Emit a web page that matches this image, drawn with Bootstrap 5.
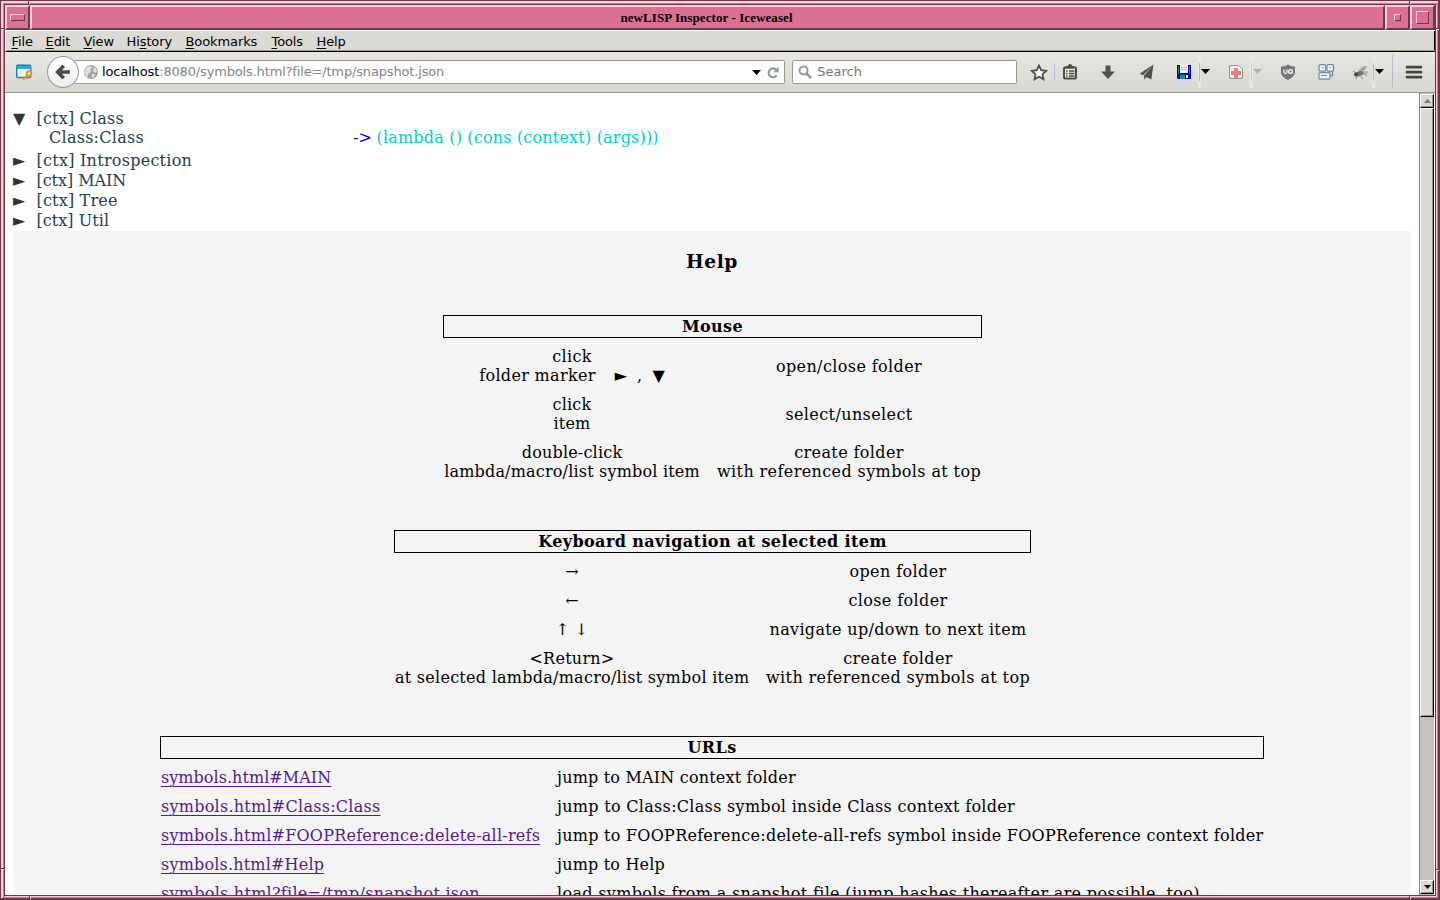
<!DOCTYPE html>
<html lang="en">
<head>
<meta charset="utf-8">
<title>newLISP Inspector - Iceweasel</title>
<link href="https://cdn.jsdelivr.net/npm/bootstrap@5.3.0/dist/css/bootstrap.min.css" rel="stylesheet">
<style>
:root{--deep:#6b3a4a;--lite:#ffc9d8;--rose:#db7093;--face:#dcdad5}
body{width:1440px;height:900px;overflow:hidden;background:var(--deep);font:13px/16px "DejaVu Sans",sans-serif;color:#000}
svg{display:block;flex:none}
/* window frame */
.frame-win{width:1440px;height:900px;padding:1px 2px 2px 1px;background:var(--deep)}
.frame-edge{height:897px;width:1437px;background:var(--rose);border:solid var(--lite);border-width:2px 0 0 2px;padding:1px}
.frame-core{width:1432px;height:892px;border:1px solid var(--deep);box-shadow:1px 1px var(--lite)}
.notch{position:absolute;background:var(--deep)}
.notch.v{width:2px;height:3px;border-right:1px solid var(--lite)}
.notch.h{height:2px;width:3px;border-bottom:1px solid var(--lite)}
.tbar{height:25px}
.tb{background:var(--rose);border:2px solid;border-color:var(--lite) var(--deep) var(--deep) var(--lite);height:25px}
.ttl{font:bold 13px/21px "Liberation Serif",serif;letter-spacing:.08px;padding-right:2px}
.bev{border:1px solid;border-color:var(--lite) var(--deep) var(--deep) var(--lite)}
/* menu and toolbar */
.menus{height:22px;background:var(--face);border-top:1px solid #fff;border-left:1px solid #fff;border-bottom:1px solid #000;box-shadow:inset 0 -1px #9a978d,inset -1px 0 #000;letter-spacing:-.1px}
.menus u{text-underline-offset:2px;text-decoration-thickness:1px}
.tools{height:41px;background:linear-gradient(#e8e6e3,#d9d7d1);border-bottom:1px solid #9b978b}
.back-b{width:32px;height:32px;border:1px solid #929aa8;border-radius:50%;background:linear-gradient(#fff,#edecea);z-index:2}
.field{height:24px;background:#fff;border:1px solid #9b978b;border-radius:2px}
/* page */
.view{height:802px}
.pg{width:1414px;height:802px;background:#fff;padding:16px 8px 0;overflow:hidden;font:16px/19px "DejaVu Serif",serif;letter-spacing:.26px}
.tree{color:#1e4054}
.tree .node{height:20px}
.mk{font-family:"DejaVu Sans",sans-serif;letter-spacing:0;color:#333;width:23.5px}
.blk{color:#000}
.help{background:#f4f4f4;height:671px;padding-top:19px;width:1398px}
.help h3{font:bold 18.72px/22px "DejaVu Serif",serif;letter-spacing:.55px;margin:0 0 43px}
.cap{border:1px solid #000;height:23px;line-height:21px;font-weight:bold;letter-spacing:.4px;margin-bottom:9px}
.pairs{column-gap:17px;row-gap:10px;padding:0 1px;align-items:center;white-space:nowrap}
.mouse,.keys{margin-bottom:49px}
.mouse{width:539px;margin-left:430px}.mouse .pairs{grid-template-columns:256px 264px}
.keys{width:637px;margin-left:381px}.keys .pairs{grid-template-columns:354px 264px}
.urls{width:1104px;margin-left:147px}.urls .pairs{grid-template-columns:379px 706px}
.urls a{color:#551a8b;text-underline-offset:3px;text-decoration-thickness:1px}
.s0{letter-spacing:-.05px}.s1{letter-spacing:.05px}.s2{letter-spacing:.19px}.s3{letter-spacing:.33px}.s4{letter-spacing:.39px}
.sbar{width:16px;background:#c4c2bc;border-left:1px solid #84827c;border-right:1px solid #fff;padding:1px 0}
.knob{background:var(--face);border:1px solid;border-color:#fff #000 #000 #fff;box-shadow:inset -1px -1px #9a978d}
</style>
</head>
<body>
<div class="frame-win position-relative">
<div class="frame-edge"><div class="frame-core">
  <header class="tbar d-flex">
    <div class="tb d-flex align-items-center justify-content-center" style="width:25px"><div class="bev" style="width:15px;height:7px"></div></div>
    <div class="tb ttl flex-fill text-center">newLISP Inspector - Iceweasel</div>
    <div class="tb d-flex align-items-center justify-content-center" style="width:25px"><div class="bev" style="width:7px;height:7px"></div></div>
    <div class="tb d-flex align-items-center justify-content-center" style="width:25px"><div class="bev" style="width:13px;height:13px"></div></div>
  </header>
  <nav class="menus d-flex" style="padding:3px 0 0 5.500px">
    <span style="width:34px"><u>F</u>ile</span><span style="width:38px"><u>E</u>dit</span><span style="width:43px"><u>V</u>iew</span><span style="width:59px">Hi<u>s</u>tory</span><span style="width:86px"><u>B</u>ookmarks</span><span style="width:45px"><u>T</u>ools</span><span><u>H</u>elp</span>
  </nav>
  <div class="tools d-flex align-items-center">
    <svg style="margin-left:10px" width="18" height="18" viewBox="0 0 18 18"><rect x="1.700" y="2.200" width="14" height="12.300" rx="1" fill="#f4f9fc" stroke="#1481bd" stroke-width="1.400"/><path d="M2 3h13.500v3H2z" fill="#38a5dc"/><path d="M4 8h6M4 10h4" stroke="#cfe0e8"/><circle cx="14" cy="10.500" r="2.300" fill="#fff2cf" stroke="#dc9a28" stroke-width="2"/><path d="M12 12.500 8 16.500" stroke="#dc9a28" stroke-width="2.200"/><path d="M10.500 14.500l1.500 1.500" stroke="#dc9a28" stroke-width="1.500"/></svg>
    <div class="back-b d-flex align-items-center justify-content-center" style="margin-left:14px"><svg width="16" height="16" viewBox="0 0 16 16"><path d="M8.700 1.800 2.700 8l6 6.200M3 8h12" fill="none" stroke="#4a4b49" stroke-width="3.600"/></svg></div>
    <div class="field d-flex align-items-center" style="width:712px;margin-left:-5px;padding-left:8px">
      <svg width="16" height="16" viewBox="0 0 16 16"><circle cx="8" cy="8" r="7" fill="#a5a5a5"/><path d="M2 6l2-3 4-1 1 2-2 2 1 2-3 2-1 4-2-4zM10 3l3 1 1 4-2 1-2-2 1-2zM9 10l3 0-1 3-2 1z" fill="#e2e2e2"/></svg>
      <span style="margin-left:3px;letter-spacing:-.13px">localhost<span style="color:#858585;letter-spacing:-.16px">:8080/symbols.html?file=/tmp/snapshot.json</span></span>
      <svg class="ms-auto" width="9" height="5" viewBox="0 0 9 5"><path d="M0 0h9L4.500 5z"/></svg>
      <svg style="margin:0 4px 0 6px" width="13" height="13" viewBox="0 0 13 13"><path d="M9.700 9.300A4.400 4.400 0 1 1 9 3.600" fill="none" stroke="#8f9ca8" stroke-width="2.200"/><path d="M11.700.700v5.600H6.300z" fill="#8f9ca8"/></svg>
    </div>
    <div class="field d-flex align-items-center" style="width:225px;margin-left:7px;padding-left:5px;color:#767676">
      <svg width="14" height="14" viewBox="0 0 14 14"><circle cx="5.500" cy="5.500" r="4" fill="none" stroke="#999" stroke-width="2"/><path d="m8.500 8.500 4.700 4.700" stroke="#999" stroke-width="2.600"/></svg>
      <span style="margin-left:5px">Search</span>
    </div>
    <svg width="418" height="40" viewBox="1017 52 418 40">
      <path d="M1039 65.500l2.200 4.700 5 .600-3.700 3.500 1 5-4.500-2.500-4.500 2.500 1-5-3.700-3.500 5-.600z" fill="#f2f2f0" stroke="#4a4b49" stroke-width="1.700"/>
      <path d="M1054.500 63v18" stroke="#b8c3cf"/>
      <rect x="1064" y="67.500" width="12" height="11" rx="1" fill="#eee" stroke="#4a4b49" stroke-width="2"/><path d="M1066 66h2a2 2 0 0 1 4 0h2v2.500h-8z" fill="#4a4b49"/><path d="M1066 71h1.500M1069 71h5.500M1066 73.500h1.500M1069 73.500h5.500M1066 76h1.500M1069 76h5.500" stroke="#4a4b49" stroke-width="1.300"/>
      <path d="M1105.500 65.500h5v6h4.500l-7 7.500-7-7.500h4.500z" fill="#51524f"/>
      <path d="M1153.500 64.500l-14 9.300 3.500 1.500zM1153.500 64.500l-9.500 11 .3 4.200 2-2.800 5 2.600z" fill="#51524f"/>
      <path d="M1177 65h14v14h-13l-1-1z" fill="#0000b8"/><path d="M1178 66h1v8h-1zM1189 66h1v8h-1z" fill="#168a87"/><path d="M1180 65h8v8h-8z" fill="#f2f2ec"/><path d="M1181 67.500h6M1181 69.500h6" stroke="#bbb"/><path d="M1180 74.500h5v4.500h-5z" fill="#168a87"/><path d="M1186 75h2v3h-2z" fill="#fff"/>
      <path d="M1199.500 56v32M1251.500 56v32M1373.500 56v32" stroke="#eceae7" stroke-width="2.500"/><path d="M1199.500 63v18M1373.500 63v18" stroke="#bab8b3"/><path d="M1251.500 63v18" stroke="#cfcdc9"/>
      <path d="M1201 69h9l-4.500 5zM1375 69h9l-4.500 5z" fill="#000"/><path d="M1253 69h9l-4.500 5z" fill="#b4b2ae"/>
      <path d="M1229.500 65.500h9l4 3.500v9.500h-13z" fill="#f5f4f1" stroke="#96948f"/><path d="M1234 68h4v3h3v4h-3v3h-4v-3h-3v-4h3z" fill="#ef7b7b"/>
      <path d="M1288 64.500c2 1.500 4.500 2 7 2v5.500c0 3.500-3 6-7 8-4-2-7-4.500-7-8v-5.500c2.500 0 5-.500 7-2z" fill="#777"/><path d="M1284 69.500v2.500a1.500 1.500 0 0 0 3 0v-2.500" fill="none" stroke="#fff" stroke-width="1.200"/><circle cx="1290.500" cy="71.500" r="1.900" fill="none" stroke="#fff" stroke-width="1.200"/>
      <g fill="#f1f2f3" stroke="#6d89b5" stroke-width="1.200"><rect x="1319" y="64.600" width="6.500" height="6.500" rx="1"/><rect x="1327" y="64.600" width="6.500" height="6.500" rx="1"/><rect x="1319" y="72.600" width="11" height="6.500" rx="1"/></g><path d="M1332.500 71v4.500h-2" fill="none" stroke="#6d89b5" stroke-width="1.300"/><path d="M1322 67.500h1.500M1329.500 67.500h1.500M1321 75.500h6" stroke="#888"/>
      <g opacity=".85"><path d="M1358 70l5-4 5 0-4 5zM1361 72l6-1 2 2-6 2z" fill="#b2b1ad"/><ellipse cx="1359.500" cy="73.500" rx="4" ry="2.600" transform="rotate(-25 1359.500 73.500)" fill="#5e5e5b"/><circle cx="1356" cy="74.500" r="2" fill="#2e2e2c"/><path d="M1353 71l3 2M1357 76l-1 3M1361 76l1.500 3M1364 73.500l3 2.500M1362 70l3-2.500" stroke="#60605d" stroke-width=".8"/></g>
      <path d="M1392.500 55v33" stroke="#b1bdca"/>
      <path d="M1407 67.200h14M1407 72.200h14M1407 77.200h14" stroke="#454643" stroke-width="2.800" stroke-linecap="round"/>
    </svg>
  </div>
  <div class="view d-flex">
    <main class="pg">
      <div class="tree">
        <div class="d-flex"><span class="mk">▼</span><span class="s2">[ctx] Class</span></div>
        <div class="d-flex" style="padding-left:36px;height:23px"><span style="width:304px">Class:Class</span><span style="color:#00f;width:23.500px;letter-spacing:0">-&gt;</span><span class="s2" style="color:#00ced1">(lambda () (cons (context) (args)))</span></div>
        <div class="node d-flex"><span class="mk">►</span><span>[ctx] Introspection</span></div>
        <div class="node d-flex"><span class="mk">►</span><span class="s0">[ctx] MAIN</span></div>
        <div class="node d-flex"><span class="mk">►</span><span class="s2">[ctx] Tree</span></div>
        <div class="node d-flex"><span class="mk">►</span><span class="s1">[ctx] Util</span></div>
      </div>
      <section class="help">
        <h3 class="text-center">Help</h3>
        <div class="mouse text-center">
          <div class="cap">Mouse</div>
          <div class="pairs d-grid">
            <div class="s3">click<br>folder marker<span class="mk blk" style="margin:0 10px 0 19px">►</span>,<span class="mk blk" style="margin-left:10px">▼</span></div><div class="s4">open/close folder</div>
            <div class="s2">click<br>item</div><div class="s4">select/unselect</div>
            <div class="s2">double-click<br>lambda/macro/list symbol item</div><div class="s4">create folder<br>with referenced symbols at top</div>
          </div>
        </div>
        <div class="keys text-center">
          <div class="cap">Keyboard navigation at selected item</div>
          <div class="pairs d-grid">
            <div>→</div><div class="s4">open folder</div>
            <div>←</div><div class="s4">close folder</div>
            <div>↑ ↓</div><div class="s3">navigate up/down to next item</div>
            <div>&lt;Return&gt;<br>at selected lambda/macro/list symbol item</div><div class="s4">create folder<br>with referenced symbols at top</div>
          </div>
        </div>
        <div class="urls">
          <div class="cap text-center">URLs</div>
          <div class="pairs d-grid">
            <div><a class="s1" href="#MAIN">symbols.html#MAIN</a></div><div class="s2">jump to MAIN context folder</div>
            <div><a href="#Class">symbols.html#Class:Class</a></div><div class="s3" style="letter-spacing:.3px">jump to Class:Class symbol inside Class context folder</div>
            <div><a style="letter-spacing:.23px" href="#FOOP">symbols.html#FOOPReference:delete-all-refs</a></div><div>jump to FOOPReference:delete-all-refs symbol inside FOOPReference context folder</div>
            <div><a class="s2" href="#Help">symbols.html#Help</a></div><div class="s2">jump to Help</div>
            <div><a style="letter-spacing:.27px" href="#file">symbols.html?file=/tmp/snapshot.json</a></div><div class="s3">load symbols from a snapshot file (jump hashes thereafter are possible, too)</div>
          </div>
        </div>
      </section>
    </main>
    <div class="sbar d-flex flex-column">
      <div class="knob d-flex align-items-center justify-content-center" style="height:14px"><svg width="7" height="4" viewBox="0 0 7 4"><path d="M0 4h7L3.500 0z" fill="#7c7a75"/></svg></div>
      <div class="knob" style="height:609px"></div>
      <div class="knob d-flex align-items-center justify-content-center mt-auto" style="height:14px"><svg width="7" height="4" viewBox="0 0 7 4"><path d="M0 0h7L3.500 4z"/></svg></div>
    </div>
  </div>
</div></div>
<i class="notch v" style="left:28px;top:1px"></i><i class="notch v" style="left:1409px;top:1px"></i>
<i class="notch v" style="left:29px;top:896px"></i><i class="notch v" style="left:1409px;top:896px"></i>
<i class="notch h" style="left:1px;top:28px"></i><i class="notch h" style="left:1px;top:868px"></i>
<i class="notch h" style="left:1436px;top:28px"></i><i class="notch h" style="left:1436px;top:869px"></i>
</div>
<script src="https://cdn.jsdelivr.net/npm/bootstrap@5.3.0/dist/js/bootstrap.bundle.min.js"></script>
</body>
</html>
